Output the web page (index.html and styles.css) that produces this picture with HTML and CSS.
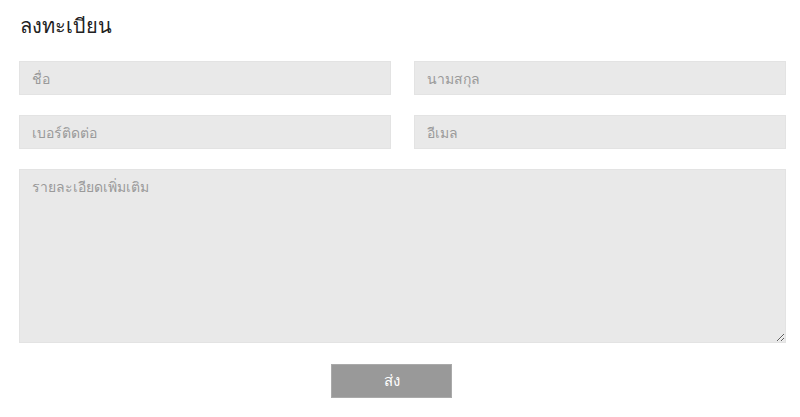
FILE: index.html
```html
<!DOCTYPE html>
<html lang="th">
<head>
    <meta charset="UTF-8">
    <meta name="viewport" content="width=device-width, initial-scale=1.0">
    <title>ลงทะเบียน</title>
    <link rel="stylesheet" href="styles.css">
</head>
<body>
    <div class="container">
        <h1>ลงทะเบียน</h1>
        <form class="register-form">
            <div class="form-row">
                <input type="text" placeholder="ชื่อ">
                <input type="text" placeholder="นามสกุล">
            </div>
            <div class="form-row">
                <input type="text" placeholder="เบอร์ติดต่อ">
                <input type="text" placeholder="อีเมล">
            </div>
            <textarea placeholder="รายละเอียดเพิ่มเติม"></textarea>
            <div class="form-actions">
                <button type="button">ส่ง</button>
            </div>
        </form>
    </div>
</body>
</html>
```
FILE: styles.css
```css
body {
    margin: 0;
    font-family: "Noto Sans", "DejaVu Sans", sans-serif;
    background: #fff;
    color: #222;
}
.container {
    width: 767px;
    margin-left: 19px;
}
h1 {
    font-size: 20px;
    font-weight: 500;
    margin: 0;
    padding: 10px 0 0 1px;
    height: 61px;
    box-sizing: border-box;
}
.form-row {
    display: grid;
    grid-template-columns: 1fr 1fr;
    column-gap: 23px;
    margin-bottom: 20px;
}
input, textarea {
    font-family: inherit;
    font-size: 14px;
    color: #444;
    background: #e9e9e9;
    border: 1px solid #e3e3e3;
    padding: 0 12px;
    box-sizing: border-box;
    outline: none;
}
input {
    height: 34px;
}
textarea {
    display: block;
    width: 100%;
    height: 174px;
    padding-top: 6px;
    resize: vertical;
}
::placeholder {
    color: #9a9a9a;
}
.form-actions {
    padding: 21px 0 0 312px;
}
button {
    width: 121px;
    height: 34px;
    background: #999;
    border: 1px solid #aaa;
    color: #fff;
    font-family: inherit;
    font-size: 15px;
    cursor: pointer;
}
```
